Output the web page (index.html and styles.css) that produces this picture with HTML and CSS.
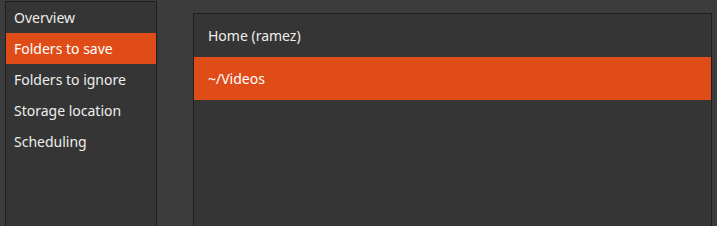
FILE: index.html
```html
<!DOCTYPE html>
<html>
<head>
<meta charset="utf-8">
<link rel="stylesheet" href="styles.css">
</head>
<body>
<div class="window">
  <nav class="sidebar">
    <div class="side-item">Overview</div>
    <div class="side-item selected">Folders to save</div>
    <div class="side-item">Folders to ignore</div>
    <div class="side-item">Storage location</div>
    <div class="side-item">Scheduling</div>
  </nav>
  <div class="content">
    <div class="list">
      <div class="list-row">Home (ramez)</div>
      <div class="list-row selected">~/Videos</div>
    </div>
  </div>
</div>
</body>
</html>
```
FILE: styles.css
```css
html, body {
  margin: 0;
  padding: 0;
  background: #3c3c3c;
  overflow: hidden;
}
.window {
  box-sizing: border-box;
  display: flex;
  align-items: stretch;
  height: 226px;
  padding-top: 1px;
  font-family: "Noto Sans", "Open Sans", sans-serif;
  font-size: 14px;
  color: #eeeeec;
}
.sidebar {
  box-sizing: border-box;
  margin-left: 5px;
  width: 152px;
  background: #353535;
  border: 1px solid #1f1f1f;
  border-bottom: none;
}
.side-item {
  height: 31px;
  line-height: 31px;
  padding-left: 8px;
  white-space: nowrap;
}
.side-item.selected {
  background: #e04c18;
  color: #ffffff;
}
.content {
  flex: 1;
  display: flex;
  padding: 12px 5px 0 36px;
}
.list {
  box-sizing: border-box;
  flex: 1;
  background: #353535;
  border: 1px solid #1f1f1f;
  border-bottom: none;
}
.list-row {
  height: 43px;
  line-height: 43px;
  padding-left: 14px;
  white-space: nowrap;
}
.list-row.selected {
  background: #e04c18;
  color: #ffffff;
}
```
